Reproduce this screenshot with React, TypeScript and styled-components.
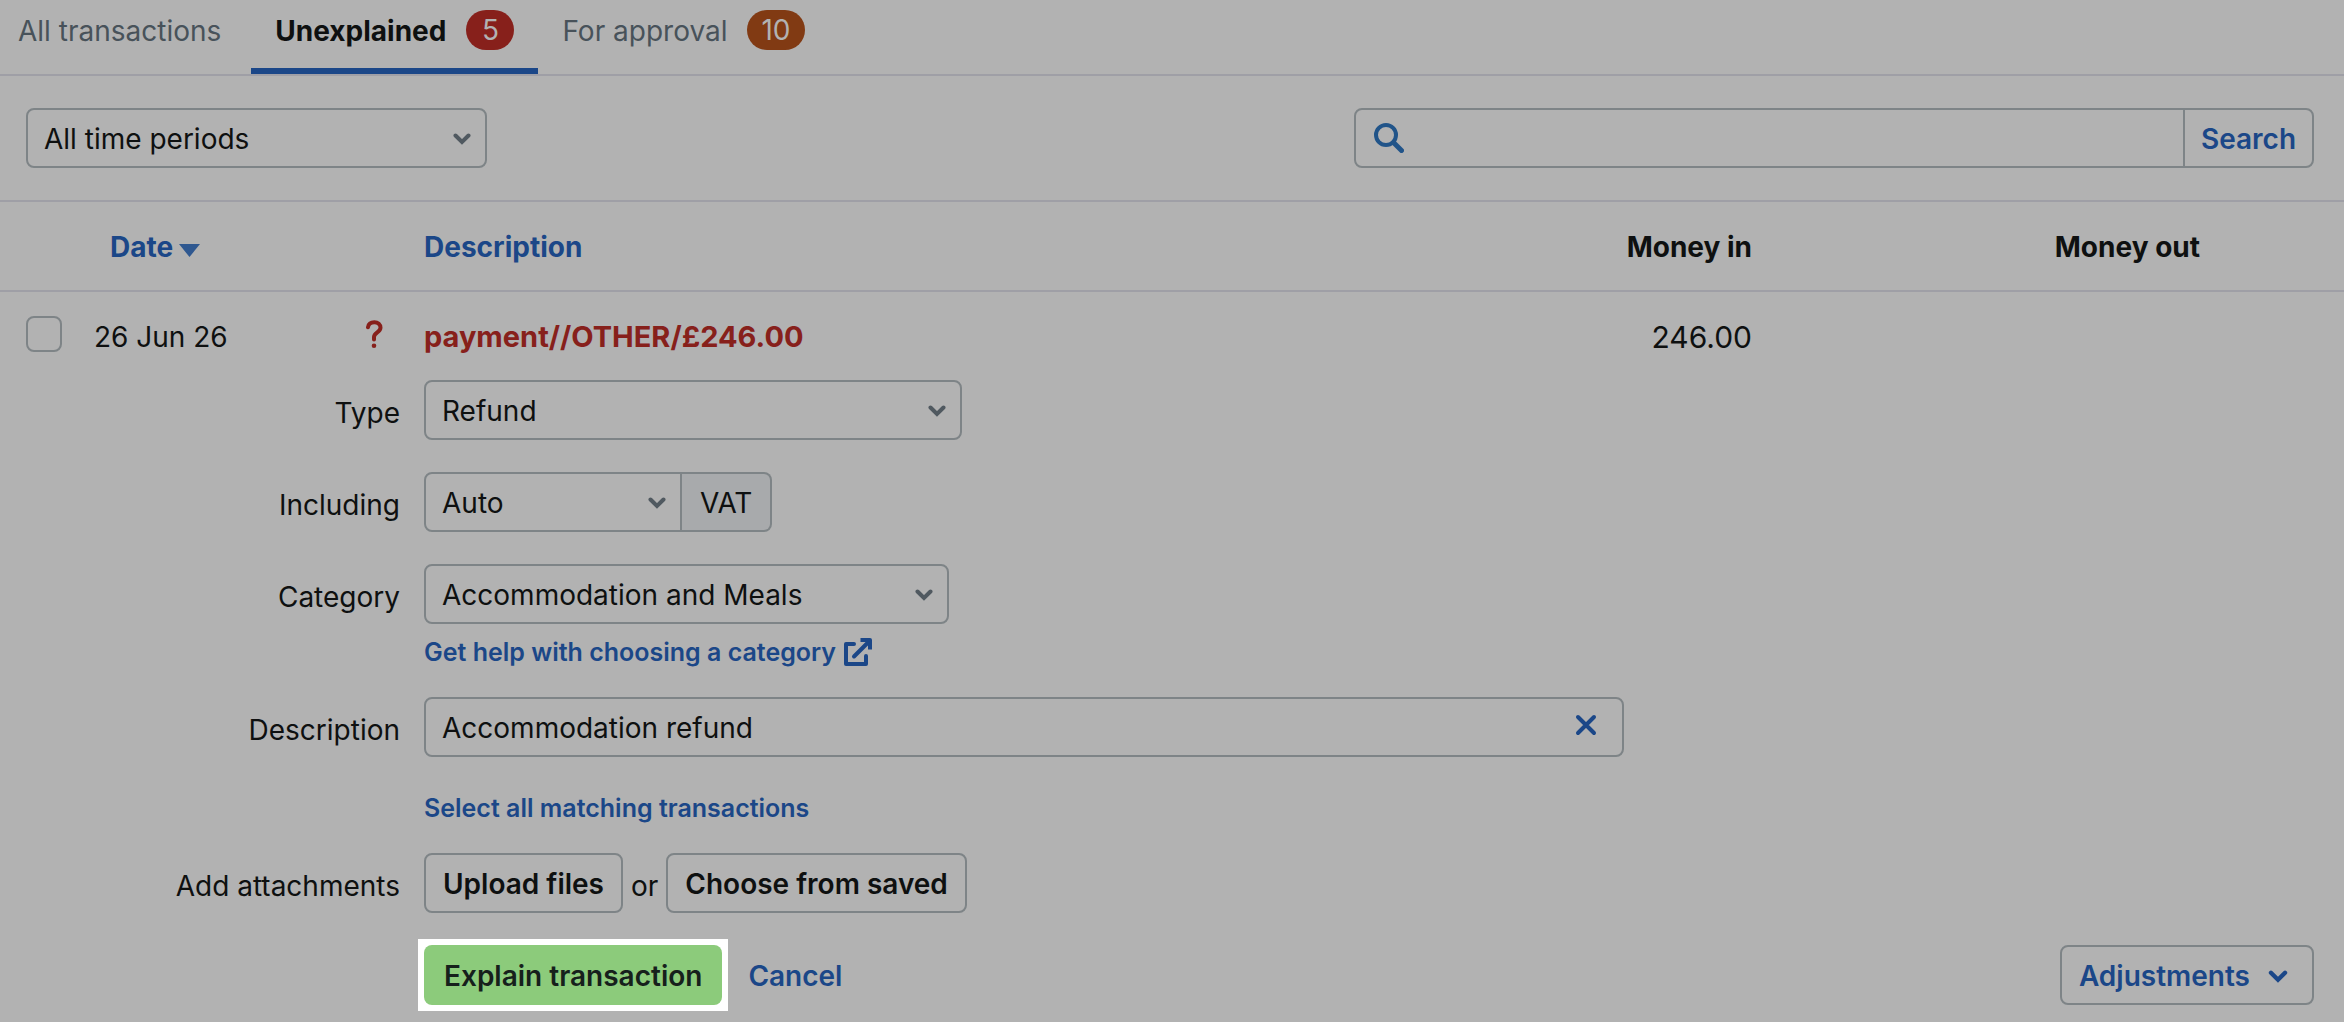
import React from "react";
import styled, { createGlobalStyle, css } from "styled-components";

const color = {
  page: "#b2b2b2",
  line: "#9f9fa6",
  border: "#7e8487",
  text: "#0e1010",
  muted: "#48525a",
  blue: "#1b4788",
  red: "#87201b",
  orange: "#813a13",
  green: "#8ccb7b",
};

const GlobalStyle = createGlobalStyle`
  *, *::before, *::after { box-sizing: border-box; }
  body {
    margin: 0;
    background: ${color.page};
    color: ${color.text};
    font: 400 28px/42px Inter, "Liberation Sans", sans-serif;
  }
  button, input, select { font: inherit; color: inherit; margin: 0; }
`;

const Page = styled.main`
  display: flex;
  flex-direction: column;
`;

const Tabs = styled.nav`
  display: flex;
  border-bottom: 2px solid ${color.line};
`;

const Tab = styled.a<{ $active?: boolean }>`
  display: flex;
  align-items: center;
  gap: 20px;
  padding: 10px 24px 18px;
  border-bottom: 6px solid ${(p) => (p.$active ? color.blue : "transparent")};
  color: ${(p) => (p.$active ? color.text : color.muted)};
  font-weight: ${(p) => (p.$active ? 700 : 400)};
  line-height: 40px;
  text-decoration: none;
  &:first-child { padding: 10px 30px 18px 18px; }
`;

const TabText = styled.span`
  padding-top: 2px;
  line-height: 38px;
`;

const Badge = styled.span<{ $tone: string }>`
  min-width: 48px;
  padding: 0 14px;
  border-radius: 20px;
  background: ${(p) => p.$tone};
  color: ${color.page};
  font-weight: 400;
  text-align: center;
`;

const Toolbar = styled.div`
  display: flex;
  justify-content: space-between;
  gap: 32px;
  padding: 32px 30px 32px 26px;
  border-bottom: 2px solid ${color.line};
`;

const control = css`
  height: 60px;
  border: 2px solid ${color.border};
  border-radius: 8px;
  background: ${color.page};
`;

const SelectFrame = styled.div<{ $width: number }>`
  position: relative;
  width: ${(p) => p.$width}px;
  svg {
    position: absolute;
    right: 16px;
    top: 25px;
    pointer-events: none;
  }
`;

const SelectControl = styled.select<{ $joined?: boolean }>`
  ${control}
  width: 100%;
  padding: 2px 48px 0 16px;
  appearance: none;
  ${(p) => p.$joined && css`border-radius: 8px 0 0 8px;`}
`;

const FieldBox = styled.div`
  ${control}
  display: flex;
  align-items: center;
  overflow: hidden;
`;

const SearchBox = styled(FieldBox)`
  flex: 0 1 960px;
  padding-left: 18px;
`;

const DescriptionBox = styled(FieldBox)`
  max-width: 1200px;
  padding: 0 25px 0 16px;
`;

const TextInput = styled.input`
  flex: 1;
  min-width: 0;
  height: 100%;
  padding: 2px 0 0;
  border: 0;
  outline: 0;
  background: transparent;
`;

const SearchButton = styled.button`
  width: 129px;
  height: 100%;
  padding: 2px 0 0;
  border: 0;
  border-left: 2px solid ${color.border};
  background: transparent;
  color: ${color.blue};
  font-weight: 600;
`;

const ClearButton = styled.button`
  display: flex;
  padding: 0 0 4px;
  border: 0;
  background: transparent;
  color: ${color.blue};
`;

const Table = styled.table`
  width: 100%;
  table-layout: fixed;
  border-collapse: collapse;
`;

const Col = styled.col<{ $width?: number }>`
  width: ${(p) => (p.$width ? `${p.$width}px` : "auto")};
`;

const HeadRow = styled.tr`
  height: 89px;
  border-bottom: 2px solid ${color.line};
`;

const Th = styled.th<{ $right?: boolean; $indent?: boolean }>`
  padding: 2px 0 0 ${(p) => (p.$indent ? 16 : 0)}px;
  font-weight: 700;
  text-align: ${(p) => (p.$right ? "right" : "left")};
`;

const SortLink = styled.a`
  display: inline-flex;
  align-items: center;
  gap: 6px;
  color: ${color.blue};
  text-decoration: none;
  svg { margin-top: 6px; }
`;

const DataRow = styled.tr`
  height: 89px;
`;

const Td = styled.td<{ $right?: boolean }>`
  padding: 24px 0 0;
  vertical-align: top;
  text-align: ${(p) => (p.$right ? "right" : "left")};
  svg { display: block; margin-top: 4px; }
`;

const Amount = styled.span`
  font-size: 30px;
`;

const Checkbox = styled.input`
  display: block;
  width: 36px;
  height: 36px;
  margin: 0 0 0 26px;
  appearance: none;
  border: 2px solid ${color.border};
  border-radius: 8px;
`;

const PaymentLink = styled.a`
  color: ${color.red};
  font-size: 29px;
  font-weight: 700;
  text-decoration: none;
`;

const FormCell = styled.td`
  padding: 0 30px 17px 0;
`;

const Form = styled.form`
  display: grid;
  grid-template-columns: 400px 1fr;
  gap: 32px 24px;
`;

const Label = styled.label`
  line-height: 66px;
  height: 60px;
  text-align: right;
`;

const Stack = styled.div`
  display: flex;
  flex-direction: column;
  align-items: stretch;
`;

const Line = styled.div<{ $gap?: number }>`
  display: flex;
  gap: ${(p) => p.$gap ?? 0}px;
`;

const Suffix = styled.span`
  height: 60px;
  padding: 0 18px;
  border: 2px solid ${color.border};
  border-left: 0;
  border-radius: 0 8px 8px 0;
  background: #a8aaac;
  line-height: 58px;
`;

const HelpLink = styled.a<{ $space: number }>`
  display: flex;
  align-items: center;
  align-self: flex-start;
  gap: 8px;
  height: 26px;
  margin-top: ${(p) => p.$space}px;
  color: ${color.blue};
  font-size: 25px;
  font-weight: 600;
  line-height: 28px;
  text-decoration: none;
`;

const Conjunction = styled.span`
  height: 60px;
  line-height: 66px;
`;

const Button = styled.button<{ $link?: boolean }>`
  ${control}
  display: flex;
  align-items: center;
  gap: 18px;
  padding: ${(p) => (p.$link ? "2px 24px 0 17px" : "2px 17px 0")};
  font-weight: 600;
  color: ${(p) => (p.$link ? color.blue : color.text)};
`;

const PrimaryButton = styled(Button)`
  padding: 2px 20px 0;
  border: 0;
  background: ${color.green};
  color: #16201c;
`;

const Spotlight = styled.span`
  margin: -6px;
  padding: 6px;
  background: #fff;
`;

const Actions = styled.div`
  grid-column: 2;
  display: flex;
  align-items: center;
  justify-content: space-between;
`;

const CancelLink = styled.a`
  color: ${color.blue};
  font-weight: 600;
  line-height: 62px;
  height: 60px;
  text-decoration: none;
`;

function Chevron({ stroke = "#505960", width = 18 }: { stroke?: string; width?: number }) {
  return (
    <svg width={width} height={width === 18 ? 12 : 13} viewBox="0 0 18 12" fill="none" stroke={stroke} strokeWidth="4" strokeLinecap="round" aria-hidden="true">
      <path d="M2.5 2.5 9 9 15.5 2.5" />
    </svg>
  );
}

function SearchIcon() {
  return (
    <svg width="30" height="30" viewBox="0 0 30 30" fill="none" stroke="#215489" strokeLinecap="round" aria-hidden="true">
      <circle cx="12" cy="12" r="10" strokeWidth="4" />
      <path d="M19.5 19.5 27.5 27.5" strokeWidth="5" />
    </svg>
  );
}

function ExternalIcon() {
  return (
    <svg width="28" height="28" viewBox="0 0 28 28" fill="none" stroke={color.blue} strokeWidth="4" aria-hidden="true">
      <path d="M10 6H2v20h20v-8" strokeLinejoin="round" strokeLinecap="round" />
      <path d="M10 18.5 25 3.5" strokeLinecap="round" />
      <path d="M16.5 2H26v9.5" strokeLinejoin="round" />
    </svg>
  );
}

function QuestionIcon() {
  return (
    <svg width="17" height="28" viewBox="0 0 17 28" fill="none" role="img" aria-label="Unexplained">
      <path d="M2 7.2C2.5 3.8 5 2.2 8.3 2.2c3.7 0 6.2 2.3 6.2 5.6C14.5 12.2 8 12.5 8 17v2.5" stroke={color.red} strokeWidth="4" strokeLinecap="round" />
      <circle cx="8" cy="25.7" r="2.3" fill={color.red} />
    </svg>
  );
}

function ClearIcon() {
  return (
    <svg width="22" height="22" viewBox="0 0 22 22" stroke="currentColor" strokeWidth="4" strokeLinecap="round" aria-hidden="true">
      <path d="M3 3 19 19M19 3 3 19" />
    </svg>
  );
}

function SortIcon() {
  return (
    <svg width="21" height="13" viewBox="0 0 21 13" aria-hidden="true">
      <path d="M0 0H21L10.5 13Z" fill="#2f5890" />
    </svg>
  );
}

type SelectProps = { id?: string; label?: string; value: string; width: number; joined?: boolean };

function Select({ id, label, value, width, joined }: SelectProps) {
  return (
    <SelectFrame $width={width}>
      <SelectControl id={id} aria-label={label} $joined={joined} defaultValue={value}>
        <option>{value}</option>
      </SelectControl>
      <Chevron />
    </SelectFrame>
  );
}

function ExplainForm() {
  return (
    <Form onSubmit={(e) => e.preventDefault()}>
      <Label htmlFor="type">Type</Label>
      <Line>
        <Select id="type" value="Refund" width={538} />
      </Line>

      <Label htmlFor="vat">Including</Label>
      <Line>
        <Select id="vat" value="Auto" width={258} joined />
        <Suffix>VAT</Suffix>
      </Line>

      <Label htmlFor="category">Category</Label>
      <Stack>
        <Select id="category" value="Accommodation and Meals" width={525} />
        <HelpLink href="#category-help" $space={15}>
          Get help with choosing a category
          <ExternalIcon />
        </HelpLink>
      </Stack>

      <Label htmlFor="description">Description</Label>
      <Stack>
        <DescriptionBox>
          <TextInput id="description" defaultValue="Accommodation refund" />
          <ClearButton type="button" aria-label="Clear description">
            <ClearIcon />
          </ClearButton>
        </DescriptionBox>
        <HelpLink href="#matching" $space={38}>Select all matching transactions</HelpLink>
      </Stack>

      <Label as="span">Add attachments</Label>
      <Line $gap={8}>
        <Button type="button">Upload files</Button>
        <Conjunction>or</Conjunction>
        <Button type="button">Choose from saved</Button>
      </Line>

      <Actions>
        <Line $gap={26}>
          <Spotlight>
            <PrimaryButton type="submit">Explain transaction</PrimaryButton>
          </Spotlight>
          <CancelLink href="#cancel">Cancel</CancelLink>
        </Line>
        <Button type="button" $link>
          Adjustments
          <Chevron stroke={color.blue} width={20} />
        </Button>
      </Actions>
    </Form>
  );
}

export default function App() {
  return (
    <Page>
      <GlobalStyle />
      <Tabs>
        <Tab href="#all"><TabText>All transactions</TabText></Tab>
        <Tab href="#unexplained" $active>
          <TabText>Unexplained</TabText>
          <Badge $tone={color.red}>5</Badge>
        </Tab>
        <Tab href="#approval">
          <TabText>For approval</TabText>
          <Badge $tone={color.orange}>10</Badge>
        </Tab>
      </Tabs>

      <Toolbar>
        <Select label="Time period" value="All time periods" width={461} />
        <SearchBox>
          <SearchIcon />
          <TextInput type="text" aria-label="Search transactions" />
          <SearchButton type="button">Search</SearchButton>
        </SearchBox>
      </Toolbar>

      <Table>
        <colgroup>
          <Col $width={94} />
          <Col $width={272} />
          <Col $width={58} />
          <Col />
          <Col $width={448} />
          <Col $width={448} />
          <Col $width={144} />
        </colgroup>
        <thead>
          <HeadRow>
            <Th />
            <Th $indent>
              <SortLink href="#date">Date<SortIcon /></SortLink>
            </Th>
            <Th />
            <Th>
              <SortLink href="#description-sort">Description</SortLink>
            </Th>
            <Th $right>Money in</Th>
            <Th $right>Money out</Th>
            <Th />
          </HeadRow>
        </thead>
        <tbody>
          <DataRow>
            <Td><Checkbox type="checkbox" aria-label="Select transaction" /></Td>
            <Td>26 Jun 26</Td>
            <Td><QuestionIcon /></Td>
            <Td><PaymentLink href="#payment">payment//OTHER/£246.00</PaymentLink></Td>
            <Td $right><Amount>246.00</Amount></Td>
            <Td />
            <Td />
          </DataRow>
          <tr>
            <FormCell colSpan={7}>
              <ExplainForm />
            </FormCell>
          </tr>
        </tbody>
      </Table>
    </Page>
  );
}
